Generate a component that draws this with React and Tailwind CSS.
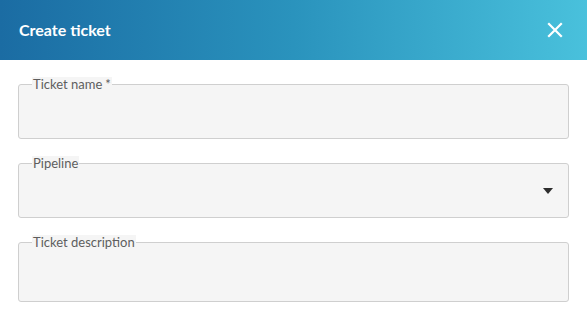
export default function App() {
  const fields = [
    { label: "Ticket name", req: true, h: "h-[55px]", select: false },
    { label: "Pipeline", req: false, h: "h-[55px]", select: true },
    { label: "Ticket description", req: false, h: "h-[60px]", select: false },
  ];
  return (
    <div className="w-[587px] h-[320px] bg-white overflow-hidden" style={{ fontFamily: "Lato, 'Open Sans', sans-serif" }}>
      <div className="h-[60px] flex items-center justify-between pl-[19px] pr-[24px] bg-gradient-to-r from-[#1b6ca3] via-[#2a93bd] to-[#49c1dc]">
        <h1 className="text-white text-[16px] font-bold leading-none">Create ticket</h1>
        <svg width="16" height="16" viewBox="0 0 16 16" className="block">
          <path d="M2 2 L14 14 M14 2 L2 14" stroke="white" strokeWidth="2.2" strokeLinecap="square" />
        </svg>
      </div>
      <div className="w-[587px] px-[18px] pt-[24px] flex flex-col gap-[24px]">
        {fields.map((f) => (
          <div key={f.label} className={`relative ${f.h} border border-[#cfcfcf] rounded-[3px] bg-[#f5f5f5] flex items-center justify-end pr-[15px]`}>
            <span className="absolute -top-[8px] left-[13px] px-[1px] bg-[#f5f5f5] text-[13px] leading-[15px] text-[#5e5e5e]">
              {f.label}
              {f.req && <span className="ml-[3px]">*</span>}
            </span>
            {f.select && (
              <svg width="10" height="6" viewBox="0 0 10 6" className="block mt-[1px]">
                <path d="M0 0 L10 0 L5 6 Z" fill="#2d2d2d" />
              </svg>
            )}
          </div>
        ))}
      </div>
    </div>
  );
}
